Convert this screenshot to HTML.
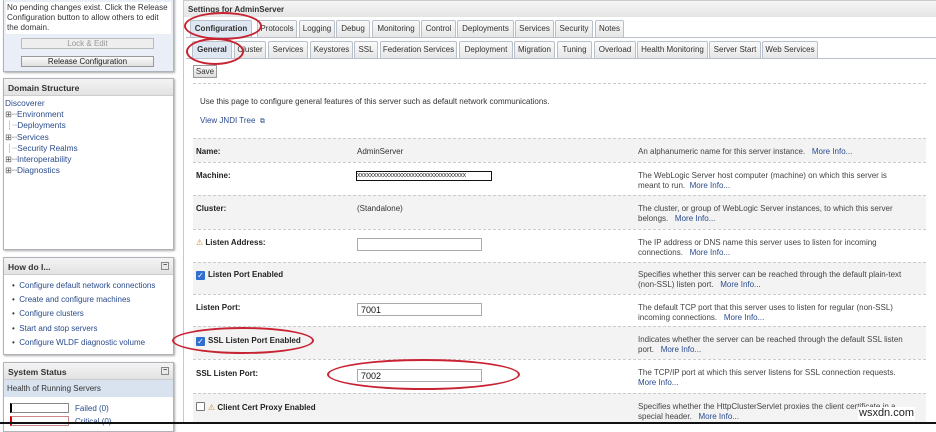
<!DOCTYPE html>
<html><head><style>
*{margin:0;padding:0;box-sizing:border-box}
body{width:936px;height:424px;overflow:hidden;background:#fff;font-family:"Liberation Sans","DejaVu Sans",sans-serif;font-size:8px;color:#333;position:relative}
.a{position:absolute}
.lnk{color:#2a4b8d}
.panel{position:absolute;left:3px;width:171px;border:1px solid #b0b4ba;box-shadow:1px 1px 2px #aaa;background:#fff}
.ph{height:17px;background:linear-gradient(#f4f4f4,#e2e2e2);border-bottom:1px solid #ccc;font-weight:bold;font-size:8.5px;padding:4px 4px;color:#333}
.tab{position:absolute;height:17px;border:1px solid #b8c0cc;border-bottom:none;background:linear-gradient(#fafafa,#e6e6e6);font-size:8px;text-align:center;line-height:16px;color:#333;border-radius:2px 2px 0 0}
.row{position:absolute;left:193px;width:733px;border-top:1px dashed #ccc}
.g{background:#f3f3f3}
.lb{position:absolute;left:3px;font-weight:bold;font-size:8px;color:#222}
.ds{position:absolute;left:445px;width:272px;font-size:8px;line-height:9.5px;color:#444}
.inp{position:absolute;left:164px;width:125px;height:13px;border:1px solid #aaa;background:#fff;font-size:9px;padding-left:3px;line-height:12px;color:#111}
.cb{display:inline-block;width:9px;height:9px;background:#2f6fcf;border-radius:1px;color:#fff;font-size:8px;line-height:9px;text-align:center;vertical-align:-1px;margin-right:3px}
.ell{position:absolute;border:2px solid #c82333;border-radius:50%}
.li{height:14.2px;margin-left:6px}
</style></head><body>
<div class="panel" style="top:-2px;height:74px;background:#e9eef7">
 <div style="background:#fff;margin:3px 2px 0;padding:1px;line-height:10px;font-size:8.1px;color:#333">No pending changes exist. Click the Release Configuration button to allow others to edit the domain.</div>
 <div class="a" style="left:17px;top:39px;width:133px;height:11px;border:1px solid #bbb;background:#eee;color:#999;text-align:center;font-size:8px;line-height:10px">Lock &amp; Edit</div>
 <div class="a" style="left:17px;top:57px;width:133px;height:11px;border:1px solid #999;background:linear-gradient(#fafafa,#e0e0e0);color:#222;text-align:center;font-size:8px;line-height:10px">Release Configuration</div>
</div>
<div class="panel" style="top:78px;height:172px">
 <div class="ph">Domain Structure</div>
 <div style="padding:2px 1px;line-height:11.2px;font-size:8.3px" class="lnk">
  Discoverer<br>
  <span style="color:#555">⊞┈</span>Environment<br>
  <span style="color:#999">&nbsp;┊┈</span>Deployments<br>
  <span style="color:#555">⊞┈</span>Services<br>
  <span style="color:#999">&nbsp;┊┈</span>Security Realms<br>
  <span style="color:#555">⊞┈</span>Interoperability<br>
  <span style="color:#555">⊞┈</span>Diagnostics
 </div>
</div>
<div class="panel" style="top:257px;height:98px">
 <div class="ph">How do I...<span style="float:right;border:1px solid #888;width:8px;height:8px;font-size:7px;line-height:6px;text-align:center">−</span></div>
 <div style="padding:6px 2px;font-size:8px" class="lnk">
  <div class="li"><span style="color:#333">•</span>&nbsp; Configure default network connections</div>
  <div class="li"><span style="color:#333">•</span>&nbsp; Create and configure machines</div>
  <div class="li"><span style="color:#333">•</span>&nbsp; Configure clusters</div>
  <div class="li"><span style="color:#333">•</span>&nbsp; Start and stop servers</div>
  <div class="li"><span style="color:#333">•</span>&nbsp; Configure WLDF diagnostic volume</div>
 </div>
</div>
<div class="panel" style="top:362px;height:70px">
 <div class="ph">System Status<span style="float:right;border:1px solid #888;width:8px;height:8px;font-size:7px;line-height:6px;text-align:center">−</span></div>
 <div style="background:#d9e3f0;height:17px;padding:4px 3px;font-size:8px">Health of Running Servers</div>
 <div class="a" style="left:6px;top:40px;width:59px;height:10px;border:1px solid #888;border-left:2px solid #000"></div>
 <div class="a lnk" style="left:71px;top:41px">Failed (0)</div>
 <div class="a" style="left:6px;top:53px;width:59px;height:10px;border:1px solid #c88;border-left:2px solid #c00"></div>
 <div class="a lnk" style="left:71px;top:54px">Critical (0)</div>
</div>
<div class="a" style="left:183px;top:0;width:1px;height:424px;background:#c8c8c8"></div>
<div class="a" style="left:184px;top:0;width:752px;height:17px;background:linear-gradient(#f6f6f6,#e4e4e4);border-top:1px solid #ccc;font-weight:bold;font-size:8px;padding:4px 4px">Settings for AdminServer</div>
<div class="a" style="left:186px;top:37px;width:750px;height:1px;background:#b8c0cc"></div>
<div class="a" style="left:186px;top:58px;width:750px;height:1px;background:#b8c0cc"></div>
<div class="tab" style="left:190px;top:20px;width:62px;background:#dfe7f2;font-weight:bold">Configuration</div>
<div class="tab" style="left:257px;top:20px;width:40px">Protocols</div>
<div class="tab" style="left:299px;top:20px;width:36px">Logging</div>
<div class="tab" style="left:336px;top:20px;width:34px">Debug</div>
<div class="tab" style="left:372px;top:20px;width:48px">Monitoring</div>
<div class="tab" style="left:421px;top:20px;width:35px">Control</div>
<div class="tab" style="left:457px;top:20px;width:57px">Deployments</div>
<div class="tab" style="left:515px;top:20px;width:39px">Services</div>
<div class="tab" style="left:555px;top:20px;width:38px">Security</div>
<div class="tab" style="left:595px;top:20px;width:29px">Notes</div>
<div class="tab" style="left:192px;top:41px;width:40px;background:#dfe7f2;font-weight:bold">General</div>
<div class="tab" style="left:234px;top:41px;width:32px">Cluster</div>
<div class="tab" style="left:268px;top:41px;width:40px">Services</div>
<div class="tab" style="left:310px;top:41px;width:43px">Keystores</div>
<div class="tab" style="left:354px;top:41px;width:24px">SSL</div>
<div class="tab" style="left:380px;top:41px;width:77px">Federation Services</div>
<div class="tab" style="left:459px;top:41px;width:54px">Deployment</div>
<div class="tab" style="left:514px;top:41px;width:41px">Migration</div>
<div class="tab" style="left:557px;top:41px;width:35px">Tuning</div>
<div class="tab" style="left:594px;top:41px;width:42px">Overload</div>
<div class="tab" style="left:637px;top:41px;width:71px">Health Monitoring</div>
<div class="tab" style="left:709px;top:41px;width:52px">Server Start</div>
<div class="tab" style="left:762px;top:41px;width:56px">Web Services</div>
<div class="a" style="left:193px;top:65px;width:24px;height:13px;border:1px solid #999;background:linear-gradient(#fafafa,#ddd);font-size:8px;line-height:11px;text-align:center">Save</div>
<div class="a" style="left:193px;top:83px;width:733px;border-top:1px dashed #ccc"></div>
<div class="a" style="left:200px;top:97px;font-size:8px">Use this page to configure general features of this server such as default network communications.</div>
<div class="a lnk" style="left:200px;top:116px;font-size:8px">View JNDI Tree &nbsp;<span style="font-size:7px">⧉</span></div>

<div class="row g" style="top:138px;height:24px"><div class="lb" style="top:8px">Name:</div><div class="a" style="left:164px;top:8px">AdminServer</div><div class="ds" style="top:8px">An alphanumeric name for this server instance. &nbsp; <span class="lnk">More Info...</span></div></div>
<div class="row" style="top:162px;height:33px"><div class="lb" style="top:8px">Machine:</div><div class="a" style="left:163px;top:8px;width:136px;height:10px;border:1px solid #111;font-size:7px;line-height:8px;overflow:hidden;letter-spacing:-0.3px">xxxxxxxxxxxxxxxxxxxxxxxxxxxxxxxxxx</div><div class="ds" style="top:8px">The WebLogic Server host computer (machine) on which this server is meant to run. &nbsp;<span class="lnk">More Info...</span></div></div>
<div class="row g" style="top:195px;height:34px"><div class="lb" style="top:8px">Cluster:</div><div class="a" style="left:164px;top:8px">(Standalone)</div><div class="ds" style="top:8px">The cluster, or group of WebLogic Server instances, to which this server belongs. &nbsp; <span class="lnk">More Info...</span></div></div>
<div class="row" style="top:229px;height:33px"><div class="lb" style="top:8px"><span style="color:#d08a20">⚠</span> Listen Address:</div><div class="inp" style="top:8px"></div><div class="ds" style="top:8px">The IP address or DNS name this server uses to listen for incoming connections. &nbsp; <span class="lnk">More Info...</span></div></div>
<div class="row g" style="top:262px;height:32px"><div class="lb" style="top:7px"><span class="cb">✓</span>Listen Port Enabled</div><div class="ds" style="top:7px">Specifies whether this server can be reached through the default plain-text (non-SSL) listen port. &nbsp; <span class="lnk">More Info...</span></div></div>
<div class="row" style="top:294px;height:32px"><div class="lb" style="top:8px">Listen Port:</div><div class="inp" style="top:8px">7001</div><div class="ds" style="top:8px">The default TCP port that this server uses to listen for regular (non-SSL) incoming connections. &nbsp; <span class="lnk">More Info...</span></div></div>
<div class="row g" style="top:326px;height:33px"><div class="lb" style="top:9px"><span class="cb">✓</span>SSL Listen Port Enabled</div><div class="ds" style="top:8px">Indicates whether the server can be reached through the default SSL listen<br>port. &nbsp; <span class="lnk">More Info...</span></div></div>
<div class="row" style="top:359px;height:34px"><div class="lb" style="top:9px">SSL Listen Port:</div><div class="inp" style="top:9px">7002</div><div class="ds" style="top:8px">The TCP/IP port at which this server listens for SSL connection requests. &nbsp; <span class="lnk">More Info...</span></div></div>
<div class="row g" style="top:393px;height:31px"><div class="lb" style="top:8px"><span class="cb" style="background:#fff;border:1px solid #777"></span><span style="color:#d08a20">⚠</span> Client Cert Proxy Enabled</div><div class="ds" style="top:8px">Specifies whether the HttpClusterServlet proxies the client certificate in a special header. &nbsp; <span class="lnk">More Info...</span></div></div>

<div class="ell" style="left:184px;top:12px;width:78px;height:28px"></div>
<div class="ell" style="left:186px;top:38px;width:58px;height:27px"></div>
<div class="ell" style="left:172px;top:327px;width:142px;height:27px"></div>
<div class="ell" style="left:327px;top:359px;width:193px;height:31px"></div>
<div class="a" style="left:858px;top:407px;font-size:11px;color:#222;background:#fff;padding:0 1px;line-height:13px">wsxdn.com</div>
<div class="a" style="left:0;top:422px;width:936px;height:2px;background:#111"></div>
</body></html>
